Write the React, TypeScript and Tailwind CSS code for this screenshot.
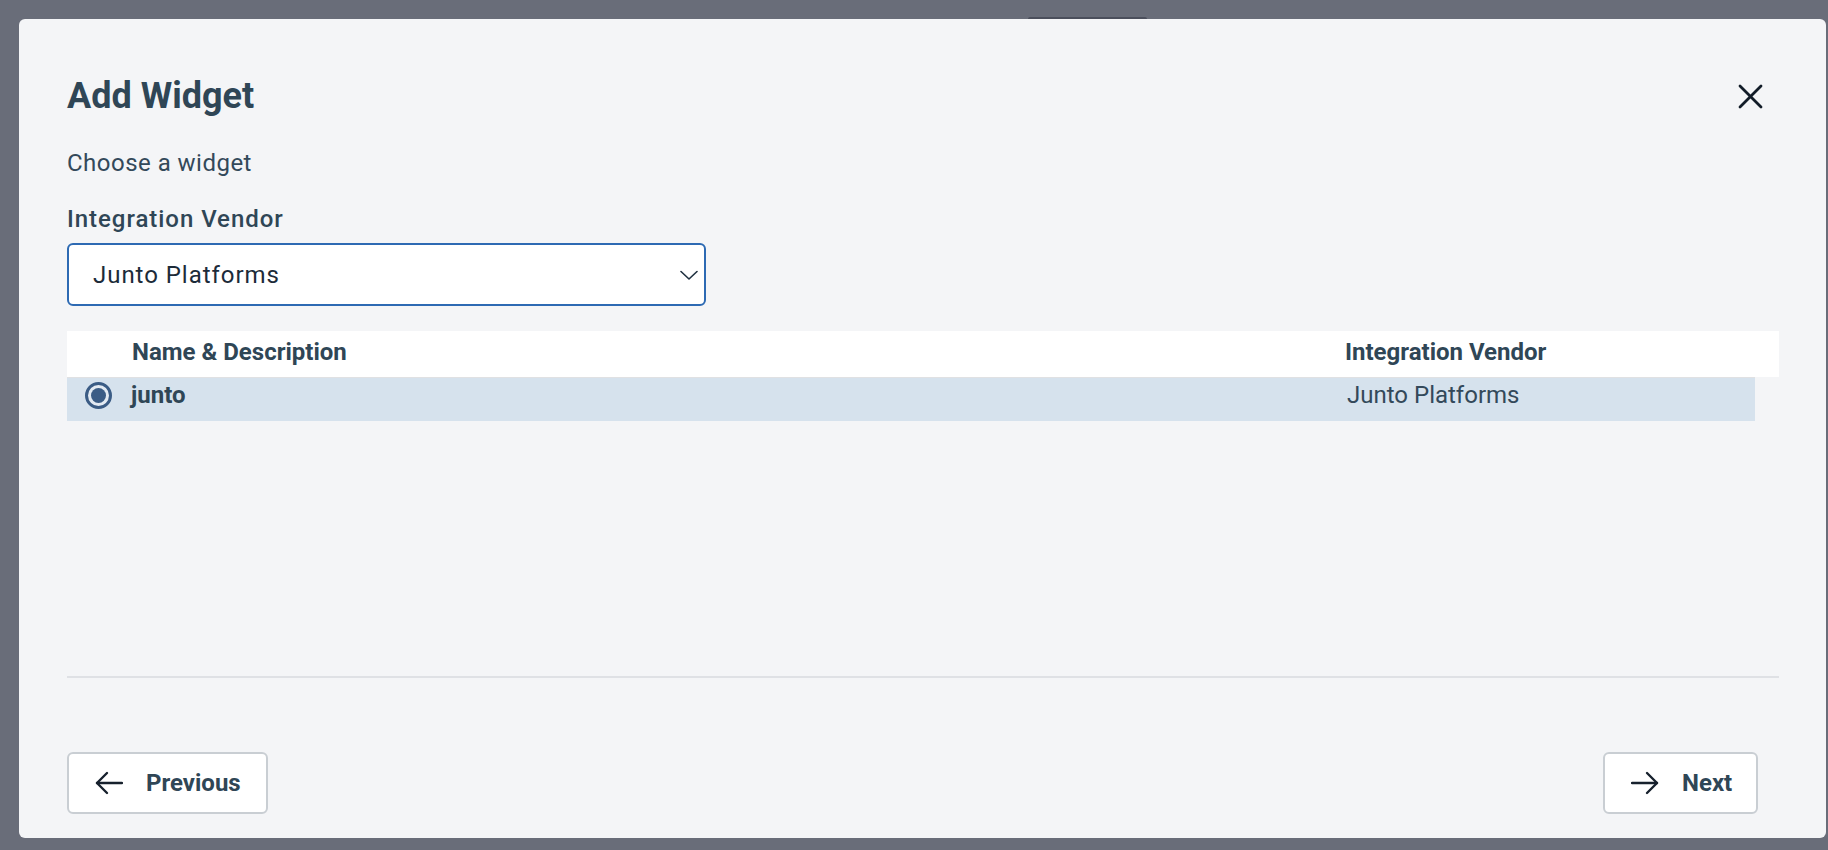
import React from 'react';

const font = { fontFamily: 'Roboto, "Noto Sans", sans-serif' };

const ArrowLeft: React.FC = () => (
    <svg width="28" height="24" viewBox="0 0 28 24" fill="none" stroke="#17212d" strokeWidth="2.4" strokeLinecap="round" strokeLinejoin="round">
        <path d="M27 12H2" />
        <path d="M12 2L2 12l10 10" />
    </svg>
);

const ArrowRight: React.FC = () => (
    <svg width="28" height="24" viewBox="0 0 28 24" fill="none" stroke="#17212d" strokeWidth="2.4" strokeLinecap="round" strokeLinejoin="round">
        <path d="M1 12h25" />
        <path d="M16 2l10 10-10 10" />
    </svg>
);

const App: React.FC = () => {
    return (
        <div className="w-full h-[850px] bg-[#696d79] pt-[17px] overflow-hidden" style={font}>
            {/* modal peeking behind */}
            <div className="ml-[1028px] w-[119px] h-[2px] bg-[#4b4f5c] rounded-t-sm" />

            <div className="ml-[19px] mr-[2px] h-[819px] rounded-[6px] bg-[#f4f5f7] flex flex-col pl-[48px] pr-[47px] pt-[55px] pb-[24px]">
                {/* Header */}
                <div className="flex items-center justify-between h-[44px]">
                    <h1 className="text-[36px] leading-[44px] font-bold text-[#2f4656]">Add Widget</h1>
                    <button className="mr-[16px] w-[25px] h-[25px] flex items-center justify-center">
                        <svg width="25" height="25" viewBox="0 0 25 25" fill="none" stroke="#121c28" strokeWidth="2.8" strokeLinecap="round">
                            <path d="M2 2l21 21" />
                            <path d="M23 2L2 23" />
                        </svg>
                    </button>
                </div>

                <p className="mt-[29px] text-[24px] leading-[32px] text-[#33495a] tracking-[0.02em]">Choose a widget</p>

                <label className="mt-[24px] text-[24px] leading-[32px] font-medium text-[#2f4656] tracking-[0.04em]">Integration Vendor</label>

                <div className="mt-[8px] h-[63px] w-[639px] border-2 border-[#2d6ab3] rounded-[6px] bg-white flex items-center justify-between pl-[24px] pr-[6px]">
                    <span className="text-[24px] leading-[32px] text-[#1c2b39] tracking-[0.04em]">Junto Platforms</span>
                    <svg width="18" height="10" viewBox="0 0 18 10" fill="none" stroke="#1f3040" strokeWidth="1.6" strokeLinecap="round" strokeLinejoin="round">
                        <path d="M1 1.5l8 7.5 8-7.5" />
                    </svg>
                </div>

                {/* Table */}
                <div className="mt-[25px]">
                    <div className="h-[46px] bg-white flex items-center pb-[4px] text-[24px] leading-[32px] font-bold text-[#2f4656]">
                        <div className="w-[65px]" />
                        <div className="w-[1213px]">Name &amp; Description</div>
                        <div className="flex-1">Integration Vendor</div>
                    </div>
                    <div className="mr-[24px] h-[44px] border-t border-[#e0e1e3] bg-[#d6e2ed] flex items-start pt-[1px] text-[24px] leading-[32px] text-[#2f4656]">
                        <div className="w-[64px] h-[32px] flex items-center pl-[18px]">
                            <div className="w-[27px] h-[27px] rounded-full border-[3px] border-[#3b5c85] bg-[#e3eaf2] flex items-center justify-center">
                                <div className="w-[15px] h-[15px] rounded-full bg-[#3b5c85]" />
                            </div>
                        </div>
                        <div className="w-[1216px] font-bold">junto</div>
                        <div className="flex-1 text-[#33495a]">Junto Platforms</div>
                    </div>
                </div>

                <div className="flex-1" />

                <div className="h-[2px] bg-[#dfe1e5]" />

                {/* Footer */}
                <div className="mt-[74px] flex justify-between">
                    <button className="w-[201px] h-[62px] border-2 border-[#c9ced3] rounded-[6px] bg-white flex items-center pl-[26px] gap-[23px] text-[24px] leading-[32px] font-bold text-[#2f4656]">
                        <ArrowLeft />
                        <span>Previous</span>
                    </button>
                    <button className="mr-[21px] w-[155px] h-[62px] border-2 border-[#c9ced3] rounded-[6px] bg-white flex items-center pl-[26px] gap-[23px] text-[24px] leading-[32px] font-bold text-[#2f4656]">
                        <ArrowRight />
                        <span>Next</span>
                    </button>
                </div>
            </div>
        </div>
    );
};

export default App;
